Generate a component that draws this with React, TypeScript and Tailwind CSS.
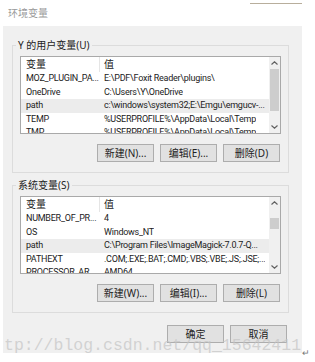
const userVars: [string, string][] = [
  ['MOZ_PLUGIN_PA...', 'E:\\PDF\\Foxit Reader\\plugins\\'],
  ['OneDrive', 'C:\\Users\\Y\\OneDrive'],
  ['path', 'c:\\windows\\system32;E:\\Emgu\\emgucv-...'],
  ['TEMP', '%USERPROFILE%\\AppData\\Local\\Temp'],
  ['TMP', '%USERPROFILE%\\AppData\\Local\\Temp'],
];

const sysVars: [string, string][] = [
  ['NUMBER_OF_PR...', '4'],
  ['OS', 'Windows_NT'],
  ['path', 'C:\\Program Files\\ImageMagick-7.0.7-Q...'],
  ['PATHEXT', '.COM;.EXE;.BAT;.CMD;.VBS;.VBE;.JS;.JSE;...'],
  ['PROCESSOR_AR...', 'AMD64'],
];

const font = "font-['Noto_Sans','Noto_Sans_CJK_SC',sans-serif]";
const listFont = "font-['Roboto','Noto_Sans_CJK_SC',sans-serif]";

function Chevron({ up }: { up?: boolean }) {
  return (
    <svg width="7" height="4" viewBox="0 0 7 4" className="block">
      <path
        d={up ? 'M0.5 3.5 L3.5 0.8 L6.5 3.5' : 'M0.5 0.5 L3.5 3.2 L6.5 0.5'}
        fill="none"
        stroke="#606060"
        strokeWidth="1.2"
      />
    </svg>
  );
}

function Button({ label }: { label: string }) {
  return (
    <button className="w-[57px] h-[18px] bg-[#e1e1e1] border border-[#adadad] text-[10px] leading-none text-[#222] flex items-center justify-center">
      {label}
    </button>
  );
}

function VarList({ rows, thumb }: { rows: [string, string][]; thumb: string }) {
  return (
    <div className={`h-[78px] border border-[#a9a9a9] bg-white flex overflow-hidden ${listFont}`}>
      <div className="flex-1 flex flex-col overflow-hidden">
        <div className="h-[15px] shrink-0 flex items-center text-[10px] text-[#222]">
          <div className="w-[79px] h-full pl-[5px] flex items-center border-r border-[#e5e5e5]">变量</div>
          <div className="pl-[4px]">值</div>
        </div>
        {rows.map(([name, value], i) => (
          <div
            key={name}
            className={`h-[13.5px] shrink-0 flex items-center text-[9px] tracking-[-0.25px] text-[#222] whitespace-nowrap ${
              i === 2 ? 'bg-[#ececec]' : ''
            }`}
          >
            <div className="w-[79px] shrink-0 pl-[5px] overflow-hidden">{name}</div>
            <div className="pl-[4px] overflow-hidden">{value}</div>
          </div>
        ))}
      </div>
      <div className="w-[11px] bg-[#f0f0f0] flex flex-col items-center">
        <div className="h-[12px] flex items-center">
          <Chevron up />
        </div>
        <div className="flex-1 w-full relative">
          <div className={`absolute left-[1px] right-[1px] bg-[#cdcdcd] ${thumb}`} />
        </div>
        <div className="h-[12px] flex items-center">
          <Chevron />
        </div>
      </div>
    </div>
  );
}

function Group({ title, rows, thumb, buttons }: {
  title: string;
  rows: [string, string][];
  thumb: string;
  buttons: string[];
}) {
  return (
    <fieldset className="ml-[9px] w-[277px] border border-[#dcdcdc] px-0 pb-[10px]">
      <legend className="ml-[3px] px-[2px] text-[10px] leading-[14px] text-[#222]">{title}</legend>
      <div className="px-[7px] pt-[4px] flex flex-col gap-[10px]">
        <VarList rows={rows} thumb={thumb} />
        <div className="flex justify-end gap-[6px] pr-[1px]">
          {buttons.map((b) => (
            <Button key={b} label={b} />
          ))}
        </div>
      </div>
    </fieldset>
  );
}

export default function App() {
  return (
    <div className={`w-[315px] h-[362px] bg-white relative overflow-hidden ${font}`}>
      <div className="ml-[3px] w-[299px] h-[353px] flex flex-col bg-[#f0f0f0]">
        {/* Title bar */}
        <div className="h-[26px] bg-white flex items-center pl-[5px] text-[10px] text-[#9a9a9a] relative">
          环境变量
          <div className="absolute top-[3px] left-[247px] right-0 h-[1px] bg-[#b8ae9c]" />
        </div>

        {/* Body */}
        <div className="flex flex-col pt-[12px]">
          <Group
            title="Y 的用户变量(U)"
            rows={userVars}
            thumb="top-[0px] h-[42px]"
            buttons={['新建(N)...', '编辑(E)...', '删除(D)']}
          />
          <div className="h-[5px]" />
          <Group
            title="系统变量(S)"
            rows={sysVars}
            thumb="top-[9px] h-[11px]"
            buttons={['新建(W)...', '编辑(I)...', '删除(L)']}
          />
          <div className="flex justify-end gap-[6px] pr-[15px] mt-[12px]">
            <Button label="确定" />
            <Button label="取消" />
          </div>
        </div>
      </div>

      {/* Watermark */}
      <div className="absolute left-[4px] top-[336px] font-['Liberation_Mono',monospace] text-[16.5px] leading-[20px] text-[#c4c4c4]/70 whitespace-nowrap">
        tp://blog.csdn.net/qq_15642411
      </div>
      <div className="absolute left-[302px] top-[348px] text-[9px] leading-[10px] text-[#777]">↵</div>
    </div>
  );
}
